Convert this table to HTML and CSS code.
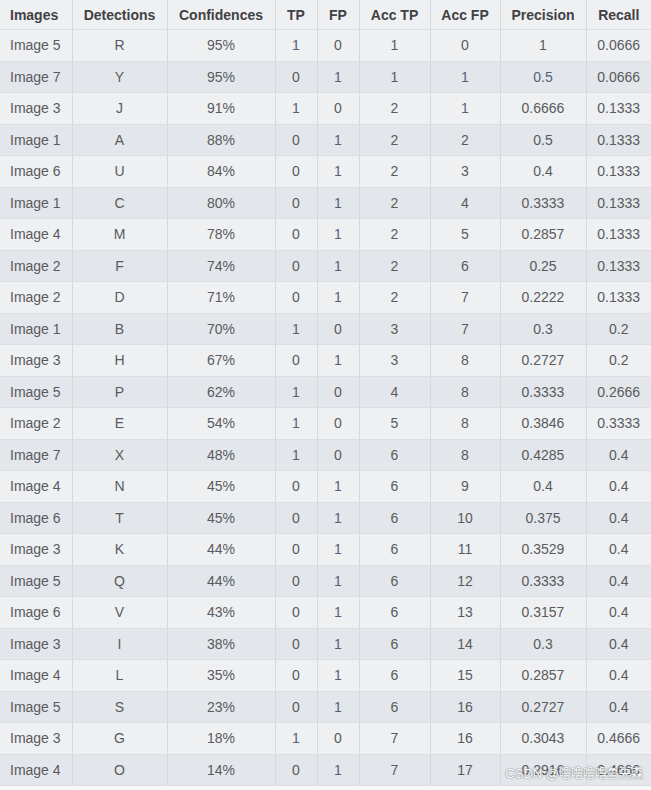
FILE: index.html
```html
<!DOCTYPE html>
<html lang="en">
<head>
<meta charset="utf-8">
<title>Detections table</title>
<link rel="stylesheet" href="styles.css">
</head>
<body>
<div class="wrap">
<table class="pr">
<colgroup>
<col class="c1"><col class="c2"><col class="c3"><col class="c4"><col class="c5"><col class="c6"><col class="c7"><col class="c8"><col class="c9">
</colgroup>
<thead>
<tr><th class="left">Images</th><th>Detections</th><th>Confidences</th><th>TP</th><th>FP</th><th>Acc TP</th><th>Acc FP</th><th>Precision</th><th>Recall</th></tr>
</thead>
<tbody>
<tr><td class="left">Image 5</td><td>R</td><td>95%</td><td class="b">1</td><td>0</td><td>1</td><td>0</td><td>1</td><td>0.0666</td></tr>
<tr><td class="left">Image 7</td><td>Y</td><td>95%</td><td>0</td><td class="b">1</td><td>1</td><td class="b">1</td><td class="b">0.5</td><td>0.0666</td></tr>
<tr><td class="left">Image 3</td><td>J</td><td>91%</td><td class="b">1</td><td>0</td><td>2</td><td class="b">1</td><td>0.6666</td><td>0.1333</td></tr>
<tr><td class="left">Image 1</td><td>A</td><td>88%</td><td>0</td><td class="b">1</td><td>2</td><td>2</td><td>0.5</td><td>0.1333</td></tr>
<tr><td class="left">Image 6</td><td>U</td><td>84%</td><td>0</td><td class="b">1</td><td>2</td><td>3</td><td>0.4</td><td>0.1333</td></tr>
<tr><td class="left">Image 1</td><td>C</td><td>80%</td><td>0</td><td class="b">1</td><td>2</td><td>4</td><td>0.3333</td><td>0.1333</td></tr>
<tr><td class="left">Image 4</td><td>M</td><td>78%</td><td>0</td><td class="b">1</td><td>2</td><td>5</td><td>0.2857</td><td>0.1333</td></tr>
<tr><td class="left">Image 2</td><td>F</td><td>74%</td><td>0</td><td class="b">1</td><td>2</td><td>6</td><td>0.25</td><td>0.1333</td></tr>
<tr><td class="left">Image 2</td><td>D</td><td>71%</td><td>0</td><td class="b">1</td><td>2</td><td>7</td><td>0.2222</td><td>0.1333</td></tr>
<tr><td class="left">Image 1</td><td>B</td><td>70%</td><td class="b">1</td><td>0</td><td>3</td><td>7</td><td>0.3</td><td>0.2</td></tr>
<tr><td class="left">Image 3</td><td>H</td><td>67%</td><td>0</td><td class="b">1</td><td>3</td><td>8</td><td>0.2727</td><td>0.2</td></tr>
<tr><td class="left">Image 5</td><td>P</td><td>62%</td><td class="b">1</td><td>0</td><td>4</td><td>8</td><td>0.3333</td><td>0.2666</td></tr>
<tr><td class="left">Image 2</td><td>E</td><td>54%</td><td class="b">1</td><td>0</td><td>5</td><td>8</td><td>0.3846</td><td>0.3333</td></tr>
<tr><td class="left">Image 7</td><td>X</td><td>48%</td><td class="b">1</td><td>0</td><td>6</td><td>8</td><td>0.4285</td><td>0.4</td></tr>
<tr><td class="left">Image 4</td><td>N</td><td>45%</td><td>0</td><td class="b">1</td><td>6</td><td>9</td><td>0.4</td><td>0.4</td></tr>
<tr><td class="left">Image 6</td><td>T</td><td>45%</td><td>0</td><td class="b">1</td><td>6</td><td>10</td><td>0.375</td><td>0.4</td></tr>
<tr><td class="left">Image 3</td><td>K</td><td>44%</td><td>0</td><td class="b">1</td><td>6</td><td>11</td><td>0.3529</td><td>0.4</td></tr>
<tr><td class="left">Image 5</td><td>Q</td><td>44%</td><td>0</td><td class="b">1</td><td>6</td><td>12</td><td>0.3333</td><td>0.4</td></tr>
<tr><td class="left">Image 6</td><td>V</td><td>43%</td><td>0</td><td class="b">1</td><td>6</td><td>13</td><td>0.3157</td><td>0.4</td></tr>
<tr><td class="left">Image 3</td><td>I</td><td>38%</td><td>0</td><td class="b">1</td><td>6</td><td>14</td><td>0.3</td><td>0.4</td></tr>
<tr><td class="left">Image 4</td><td>L</td><td>35%</td><td>0</td><td class="b">1</td><td>6</td><td>15</td><td>0.2857</td><td>0.4</td></tr>
<tr><td class="left">Image 5</td><td>S</td><td>23%</td><td>0</td><td class="b">1</td><td>6</td><td>16</td><td>0.2727</td><td>0.4</td></tr>
<tr><td class="left">Image 3</td><td>G</td><td>18%</td><td class="b">1</td><td>0</td><td>7</td><td>16</td><td>0.3043</td><td>0.4666</td></tr>
<tr><td class="left">Image 4</td><td>O</td><td>14%</td><td>0</td><td class="b">1</td><td>7</td><td>17</td><td>0.2916</td><td>0.4666</td></tr>
</tbody>
</table>
<div class="mark">CSDN @<span class="cjk">噜噜噜噜鲁先森</span></div>
</div>
</body>
</html>
```
FILE: styles.css
```css
html, body {
  margin: 0;
  padding: 0;
  background: #f7f8f9;
}
.wrap {
  position: relative;
  width: 651px;
}
.pr {
  width: 651px;
  table-layout: fixed;
  border-collapse: collapse;
  font-family: "Liberation Sans", Arial, sans-serif;
  font-size: 14px;
  color: #595b5e;
}
.c1 { width: 72px; }
.c2 { width: 95px; }
.c3 { width: 108px; }
.c4 { width: 42px; }
.c5 { width: 42px; }
.c6 { width: 71px; }
.c7 { width: 70px; }
.c8 { width: 86px; }
.c9 { width: 65px; }
.pr th, .pr td {
  padding: 0;
  text-align: center;
  border-left: 1px solid #d6d8dc;
  border-bottom: 1px solid #dcdee2;
  white-space: nowrap;
}
.pr th:first-child, .pr td:first-child {
  border-left: none;
}
.pr th {
  height: 29px;
  font-weight: bold;
  color: #3f4144;
  background: #eff0f2;
  font-size: 14px;
}
.pr td {
  height: 30.5px;
}
.pr tbody tr:nth-child(odd) td {
  background: #eef0f2;
}
.pr tbody tr:nth-child(even) td {
  background: #e3e6ea;
}
.pr .left {
  text-align: left;
  padding-left: 10px;
}
.pr td.b {
  color: #53617a;
}
.mark {
  position: absolute;
  right: 8px;
  bottom: 5px;
  font-family: "Liberation Sans", "Noto Sans CJK SC", sans-serif;
  font-size: 13px;
  color: #ffffff;
  text-shadow: 0 0 1px rgba(80, 85, 92, 0.8), 0 0 2px rgba(80, 85, 92, 0.5);
}
.mark .cjk {
  font-family: "Noto Sans CJK SC", sans-serif;
  font-size: 12px;
}
```
